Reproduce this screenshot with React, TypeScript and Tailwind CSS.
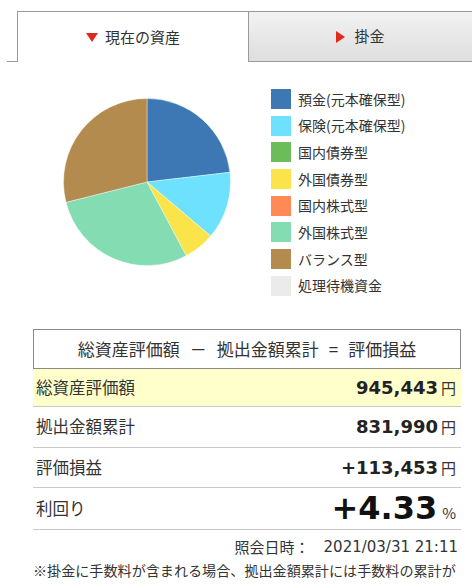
import React from "react";

// asset allocation slices (percent of total)
const slices = [
  { name: "預金(元本確保型)", color: "#3d78b4", pct: 23.15 },
  { name: "保険(元本確保型)", color: "#6ee1ff", pct: 13.05 },
  { name: "国内債券型", color: "#6cbd5a", pct: 0 },
  { name: "外国債券型", color: "#fae44a", pct: 6.03 },
  { name: "国内株式型", color: "#ff8a55", pct: 0 },
  { name: "外国株式型", color: "#84dcb2", pct: 28.85 },
  { name: "バランス型", color: "#b38b4f", pct: 28.92 },
  { name: "処理待機資金", color: "#ebebeb", pct: 0 },
];

const jp = { fontFamily: '"Noto Sans CJK JP", sans-serif' };
const num = { fontFamily: '"DejaVu Sans", "Noto Sans CJK JP", sans-serif' };

const PieChart: React.FC = () => {
  const r = 83.5;
  const c = 84;
  let start = 0;
  const paths = slices
    .filter((s) => s.pct > 0)
    .map((s) => {
      const a0 = (start / 100) * Math.PI * 2;
      start += s.pct;
      const a1 = (start / 100) * Math.PI * 2;
      const x0 = c + r * Math.sin(a0);
      const y0 = c - r * Math.cos(a0);
      const x1 = c + r * Math.sin(a1);
      const y1 = c - r * Math.cos(a1);
      const large = a1 - a0 > Math.PI ? 1 : 0;
      return (
        <path
          key={s.name}
          d={`M${c},${c} L${x0},${y0} A${r},${r} 0 ${large} 1 ${x1},${y1} Z`}
          fill={s.color}
          stroke="#ffffff"
          strokeWidth={0.4}
        />
      );
    });
  return (
    <svg width={168} height={168} viewBox="0 0 168 168">
      {paths}
    </svg>
  );
};

const Row: React.FC<{
  label: string;
  highlight?: boolean;
  height: string;
  children: React.ReactNode;
}> = ({ label, highlight, height, children }) => (
  <div
    className={`flex items-center justify-between border-b border-[#c8c8c8] pl-[3px] pr-[5px] ${height} ${
      highlight ? "bg-[#ffffcc]" : "bg-white"
    }`}
  >
    <span className="text-[16.5px] text-[#333]" style={jp}>
      {label}
    </span>
    <div className="flex items-baseline">{children}</div>
  </div>
);

export default function App() {
  return (
    <div className="w-[472px] h-[585px] overflow-hidden bg-white text-[#333]" style={jp}>
      {/* tabs */}
      <div className="flex pt-[11px] pl-[7px]">
        <div className="w-[10px] border-b border-[#9a9a9a]" />
        <div className="flex h-[51px] w-[231px] items-center justify-center gap-[7px] border-l border-t border-[#9a9a9a] bg-white">
          <svg width={12} height={9} viewBox="0 0 12 9">
            <polygon points="0,0 12,0 6,9" fill="#dd2a1d" />
          </svg>
          <span className="text-[15px] text-[#333]">現在の資産</span>
        </div>
        <div className="flex h-[51px] flex-1 items-center justify-center gap-[9px] border-b border-l border-t border-[#9a9a9a] bg-gradient-to-b from-[#f2f2f2] to-[#dedede]">
          <svg width={9} height={12} viewBox="0 0 9 12">
            <polygon points="0,0 9,6 0,12" fill="#dd2a1d" />
          </svg>
          <span className="text-[15px] text-[#333]">掛金</span>
        </div>
      </div>

      {/* chart + legend */}
      <div className="flex items-start pt-[27px]">
        <div className="ml-[63px] mt-[9px]">
          <PieChart />
        </div>
        <ul className="ml-[40px] flex flex-col gap-[6.7px]">
          {slices.map((s) => (
            <li key={s.name} className="flex h-[20px] items-center gap-[7px]">
              <span className="h-[20px] w-[20px]" style={{ backgroundColor: s.color }} />
              <span className="text-[14px] text-[#333]">{s.name}</span>
            </li>
          ))}
        </ul>
      </div>

      {/* summary */}
      <div className="ml-[33px] mt-[33px] w-[428px]">
        <div className="flex h-[40px] items-center justify-center border border-[#8a8a8a] text-[17px] text-[#333]">
          <span>総資産評価額</span>
          <span className="mx-[10px]">－</span>
          <span>拠出金額累計</span>
          <span className="mx-[10px]">=</span>
          <span>評価損益</span>
        </div>
        <Row label="総資産評価額" highlight height="h-[38px]">
          <span className="text-[18px] font-bold text-[#222]" style={num}>
            945,443
          </span>
          <span className="ml-[3px] text-[15px]">円</span>
        </Row>
        <Row label="拠出金額累計" height="h-[41px]">
          <span className="text-[18px] font-bold text-[#222]" style={num}>
            831,990
          </span>
          <span className="ml-[3px] text-[15px]">円</span>
        </Row>
        <Row label="評価損益" height="h-[40px]">
          <span className="text-[18px] font-bold text-[#222]" style={num}>
            +113,453
          </span>
          <span className="ml-[3px] text-[15px]">円</span>
        </Row>
        <Row label="利回り" height="h-[42px]">
          <span className="text-[32px] font-bold leading-none text-[#111]" style={num}>
            +4.33
          </span>
          <span className="ml-[5px] text-[15px]">%</span>
        </Row>

        <div className="mt-[6px] flex justify-end pr-[3px] text-[15px] leading-[22px]">
          <span>照会日時：</span>
          <span className="ml-[14px]" style={num}>
            2021/03/31 21:11
          </span>
        </div>
        <p className="mt-[1px] pl-[1em] -indent-[1em] text-[14.1px] leading-[22px]">
          ※掛金に手数料が含まれる場合、拠出金額累計には手数料の累計が含まれています。
        </p>
      </div>
    </div>
  );
}
